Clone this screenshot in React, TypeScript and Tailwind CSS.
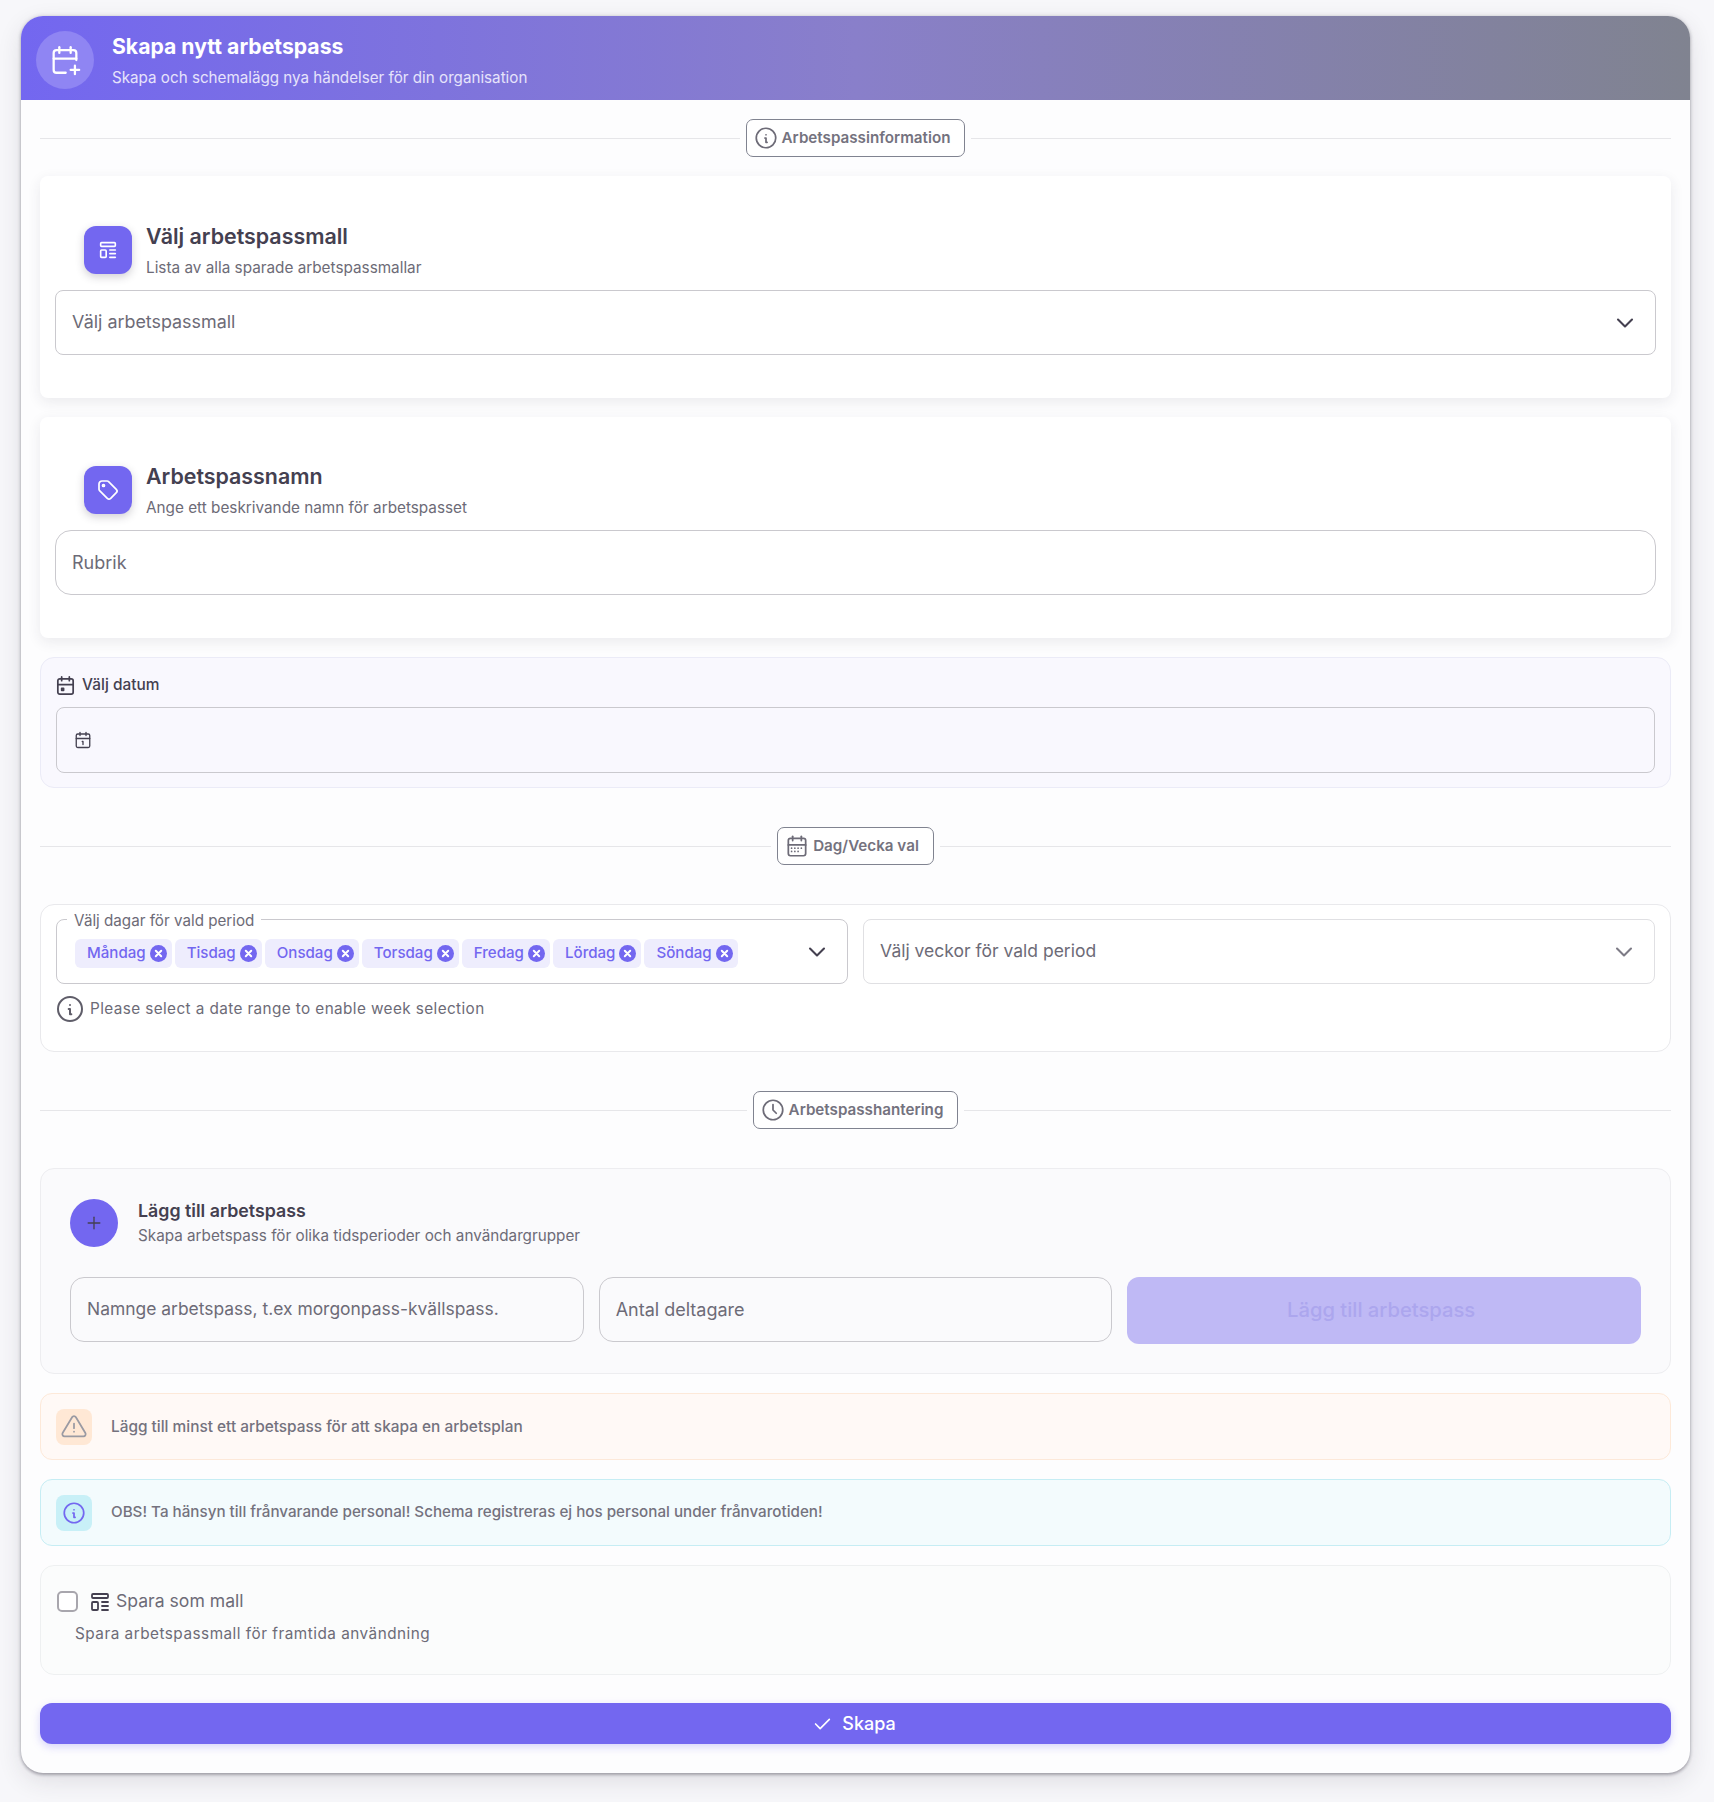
import React from "react";
import {
  TbCalendarPlus,
  TbTemplate,
  TbTag,
  TbCalendarEvent,
  TbInfoCircle,
  TbCalendarMonth,
  TbClock,
  TbAlertTriangle,
  TbPlus,
  TbCheck,
  TbChevronDown,
} from "react-icons/tb";
import { Calendar1 } from "lucide-react";

function Divider({ icon, label }: { icon: React.ReactNode; label: string }) {
  return (
    <div className="flex items-center gap-[6px]">
      <div className="h-px flex-1 bg-[#e6e6e9]" />
      <div className="flex h-[38px] items-center gap-[3px] rounded-[7px] border border-[#808390] bg-white pl-[6px] pr-[14px] text-[15.2px] font-semibold text-[#74727e]">
        {icon}
        <span>{label}</span>
      </div>
      <div className="h-px flex-1 bg-[#e6e6e9]" />
    </div>
  );
}

function SectionCard({
  icon,
  title,
  sub,
  compact,
  children,
}: {
  icon: React.ReactNode;
  title: string;
  sub: string;
  compact?: boolean;
  children: React.ReactNode;
}) {
  return (
    <div
      className={
        compact
          ? "rounded-[8px] bg-white px-[15px] pb-[43px] pt-[44px] shadow-[0_4px_14px_rgba(47,43,61,0.09)]"
          : "rounded-[8px] bg-white px-[15px] pb-[43px] pt-[45px] shadow-[0_4px_14px_rgba(47,43,61,0.09)]"
      }
    >
      <div className="mb-[12px] ml-[29px] flex items-center gap-[14px]">
        <div className="flex h-[48px] w-[48px] items-center justify-center rounded-[12px] bg-[#7367f0] text-white shadow-[0_3px_8px_rgba(47,43,61,0.22)]">
          {icon}
        </div>
        <div className="flex flex-col">
          <div className="text-[21.4px] font-semibold leading-[30px] text-[#444050]">{title}</div>
          <div className="mt-[7px] text-[15.3px] leading-[20px] text-[#6d6b77]">{sub}</div>
        </div>
      </div>
      {children}
    </div>
  );
}

function Chip({ label }: { label: string }) {
  return (
    <div className="flex h-[29px] items-center gap-[4px] rounded-[6px] bg-[#eeedfd] pl-[12px] pr-[5px] text-[15.1px] font-medium text-[#7367f0]">
      <span>{label}</span>
      <svg width="17" height="17" viewBox="0 0 17 17" className="shrink-0">
        <circle cx="8.5" cy="8.5" r="8.5" fill="#7367f0" />
        <path d="M5.8 5.8 11.2 11.2M11.2 5.8 5.8 11.2" stroke="#fff" strokeWidth="2" strokeLinecap="round" />
      </svg>
    </div>
  );
}

export default function App() {
  const days = ["Måndag", "Tisdag", "Onsdag", "Torsdag", "Fredag", "Lördag", "Söndag"];
  return (
    <div className="min-h-[1802px] bg-[#f7f7fa] pb-[28px] pl-[21px] pr-[24px] pt-[16px] [font-family:Inter,sans-serif]">
      <div className="overflow-hidden rounded-[22px] bg-[#fdfdfe] shadow-[0_0_4px_rgba(47,43,61,0.18),0_2px_3px_rgba(47,43,61,0.3),0_8px_24px_rgba(47,43,61,0.12)]">
        <div className="flex h-[84px] items-center gap-[18px] bg-[linear-gradient(90deg,#7367f0,#897fca_50%,#808390)] pl-[15px]">
          <div className="mt-[3px] flex h-[58px] w-[58px] items-center justify-center rounded-full bg-[#8f85f3] text-white">
            <TbCalendarPlus size={34} strokeWidth={1.6} />
          </div>
          <div className="pt-[3px]">
            <div className="text-[21.2px] font-bold leading-[30px] text-white">Skapa nytt arbetspass</div>
            <div className="mt-[6px] text-[15.2px] leading-[22px] text-[#e6e3fb]">
              Skapa och schemalägg nya händelser för din organisation
            </div>
          </div>
        </div>

        <div className="flex flex-col gap-[19px] pb-[29px] pl-[19px] pr-[19px] pt-[19px]">
          <Divider icon={<TbInfoCircle size={26} strokeWidth={1.6} className="text-[#6d6b77]" />} label="Arbetspassinformation" />

          <SectionCard icon={<TbTemplate size={22} strokeWidth={1.8} />} title="Välj arbetspassmall" sub="Lista av alla sparade arbetspassmallar">
            <div className="flex h-[65px] items-center justify-between rounded-[8px] border border-[#cac9ce] pl-[16px] pr-[16px] text-[17.9px] text-[#6d6b77]">
              <span>Välj arbetspassmall</span>
              <TbChevronDown size={28} strokeWidth={1.8} className="text-[#444050]" />
            </div>
          </SectionCard>

          <SectionCard compact icon={<TbTag size={24} strokeWidth={1.7} />} title="Arbetspassnamn" sub="Ange ett beskrivande namn för arbetspasset">
            <div className="flex h-[65px] items-center rounded-[16px] border border-[#cac9ce] pl-[16px] text-[18px] text-[#6d6b77]">
              Rubrik
            </div>
          </SectionCard>

          <div className="rounded-[14px] border border-[#ebebf7] bg-[#f9f8fe] px-[15px] pb-[14px] pt-[17px]">
            <div className="mb-[12px] flex h-[20px] items-center gap-[5px] text-[15.4px] font-medium text-[#444050]">
              <TbCalendarEvent size={23} strokeWidth={1.8} className="-ml-[2px]" />
              <span>Välj datum</span>
            </div>
            <div className="flex h-[66px] items-center rounded-[8px] border border-[#cac9ce] pl-[17px] text-[#444050]">
              <Calendar1 size={18} strokeWidth={1.75} />
            </div>
          </div>

          <div className="mt-[20px]">
            <Divider icon={<TbCalendarMonth size={26} strokeWidth={1.6} className="text-[#6d6b77]" />} label="Dag/Vecka val" />
          </div>

          <div className="mt-[20px] rounded-[14px] border border-[#e9e9ec] bg-white px-[15px] pb-[30px] pt-[14px]">
            <div className="grid grid-cols-2 gap-[15px]">
              <div className="relative flex h-[65px] items-center justify-between rounded-[8px] border border-[#cac9ce] pl-[18px] pr-[16px]">
                <span className="absolute -top-[9px] left-[10px] bg-white px-[7px] text-[15.2px] leading-[20px] text-[#6d6b77]">
                  Välj dagar för vald period
                </span>
                <div className="flex gap-[3px] pt-[4px]">
                  {days.map((d) => (
                    <Chip key={d} label={d} />
                  ))}
                </div>
                <TbChevronDown size={28} strokeWidth={1.8} className="text-[#444050]" />
              </div>
              <div className="flex h-[65px] items-center justify-between rounded-[8px] border border-[#e0e0e3] pl-[16px] pr-[16px] text-[17.5px] text-[#6d6b77]">
                <span>Välj veckor för vald period</span>
                <TbChevronDown size={28} strokeWidth={1.8} className="text-[#7d7b86]" />
              </div>
            </div>
            <div className="-ml-[2px] mt-[13px] flex h-[24px] items-center gap-[4px] text-[15.3px] tracking-[0.4px] text-[#6d6b77]">
              <TbInfoCircle size={32} strokeWidth={1.5} className="text-[#5f5d69]" />
              <span>Please select a date range to enable week selection</span>
            </div>
          </div>

          <div className="mt-[20px]">
            <Divider icon={<TbClock size={26} strokeWidth={1.6} className="text-[#6d6b77]" />} label="Arbetspasshantering" />
          </div>

          <div className="mt-[20px] rounded-[14px] border border-[#ededf0] bg-[#fafafc] px-[29px] pb-[29px] pt-[30px]">
            <div className="mb-[30px] flex items-center gap-[20px]">
              <div className="flex h-[48px] w-[48px] items-center justify-center rounded-full bg-[#7367f0] text-[#444050]">
                <TbPlus size={20} strokeWidth={1.6} />
              </div>
              <div>
                <div className="text-[17.8px] font-semibold leading-[24px] text-[#444050]">Lägg till arbetspass</div>
                <div className="mt-[2px] text-[15.25px] leading-[22px] text-[#6d6b77]">
                  Skapa arbetspass för olika tidsperioder och användargrupper
                </div>
              </div>
            </div>
            <div className="grid grid-cols-3 items-start gap-[15px]">
              <div className="flex h-[65px] items-center rounded-[14px] border border-[#cac9ce] pl-[16px] text-[17.45px] text-[#6d6b77]">
                Namnge arbetspass, t.ex morgonpass-kvällspass.
              </div>
              <div className="flex h-[65px] items-center rounded-[14px] border border-[#cac9ce] pl-[16px] text-[18px] text-[#6d6b77]">
                Antal deltagare
              </div>
              <div className="flex h-[67px] items-center justify-center rounded-[12px] bg-[#bfb9f5] pr-[6px] text-[20.2px] font-medium text-[#aca6ee]">
                Lägg till arbetspass
              </div>
            </div>
          </div>

          <div className="flex h-[67px] items-center gap-[19px] rounded-[12px] border border-[#fde9d9] bg-[#fff9f6] px-[15px]">
            <div className="flex h-[36px] w-[36px] items-center justify-center rounded-[8px] bg-[#ffe8d5] text-[#9a9aa3]">
              <TbAlertTriangle size={28} strokeWidth={1.5} />
            </div>
            <span className="text-[15.4px] font-medium text-[#74727e]">Lägg till minst ett arbetspass för att skapa en arbetsplan</span>
          </div>

          <div className="flex h-[67px] items-center gap-[19px] rounded-[12px] border border-[#c6edf4] bg-[#f3fbfd] px-[15px]">
            <div className="flex h-[36px] w-[36px] items-center justify-center rounded-[8px] bg-[#c8f0f7] text-[#7367f0]">
              <TbInfoCircle size={26} strokeWidth={1.6} />
            </div>
            <span className="text-[15.2px] font-medium text-[#74727e]">
              OBS! Ta hänsyn till frånvarande personal! Schema registreras ej hos personal under frånvarotiden!
            </span>
          </div>

          <div className="rounded-[14px] border border-[#eef0f1] bg-[#fbfcfc] px-[16px] pb-[29px] pt-[25px]">
            <div className="flex h-[21px] items-center">
              <div className="h-[21px] w-[21px] rounded-[5px] border-2 border-[#a8a6ad] bg-white" />
              <TbTemplate size={24} strokeWidth={1.8} className="ml-[10px] text-[#444050]" />
              <span className="ml-[4px] text-[17.6px] text-[#6d6b77]">Spara som mall</span>
            </div>
            <div className="ml-[18px] mt-[11px] text-[15.3px] leading-[22px] tracking-[0.5px] text-[#6d6b77]">
              Spara arbetspassmall för framtida användning
            </div>
          </div>

          <div className="mt-[9px] flex h-[41px] items-center justify-center gap-[9px] rounded-[12px] bg-[#7367f0] pr-[4px] text-[18px] font-medium text-white shadow-[0_3px_8px_rgba(115,103,240,0.28)]">
            <TbCheck size={22} strokeWidth={1.8} />
            <span>Skapa</span>
          </div>
        </div>
      </div>
    </div>
  );
}
